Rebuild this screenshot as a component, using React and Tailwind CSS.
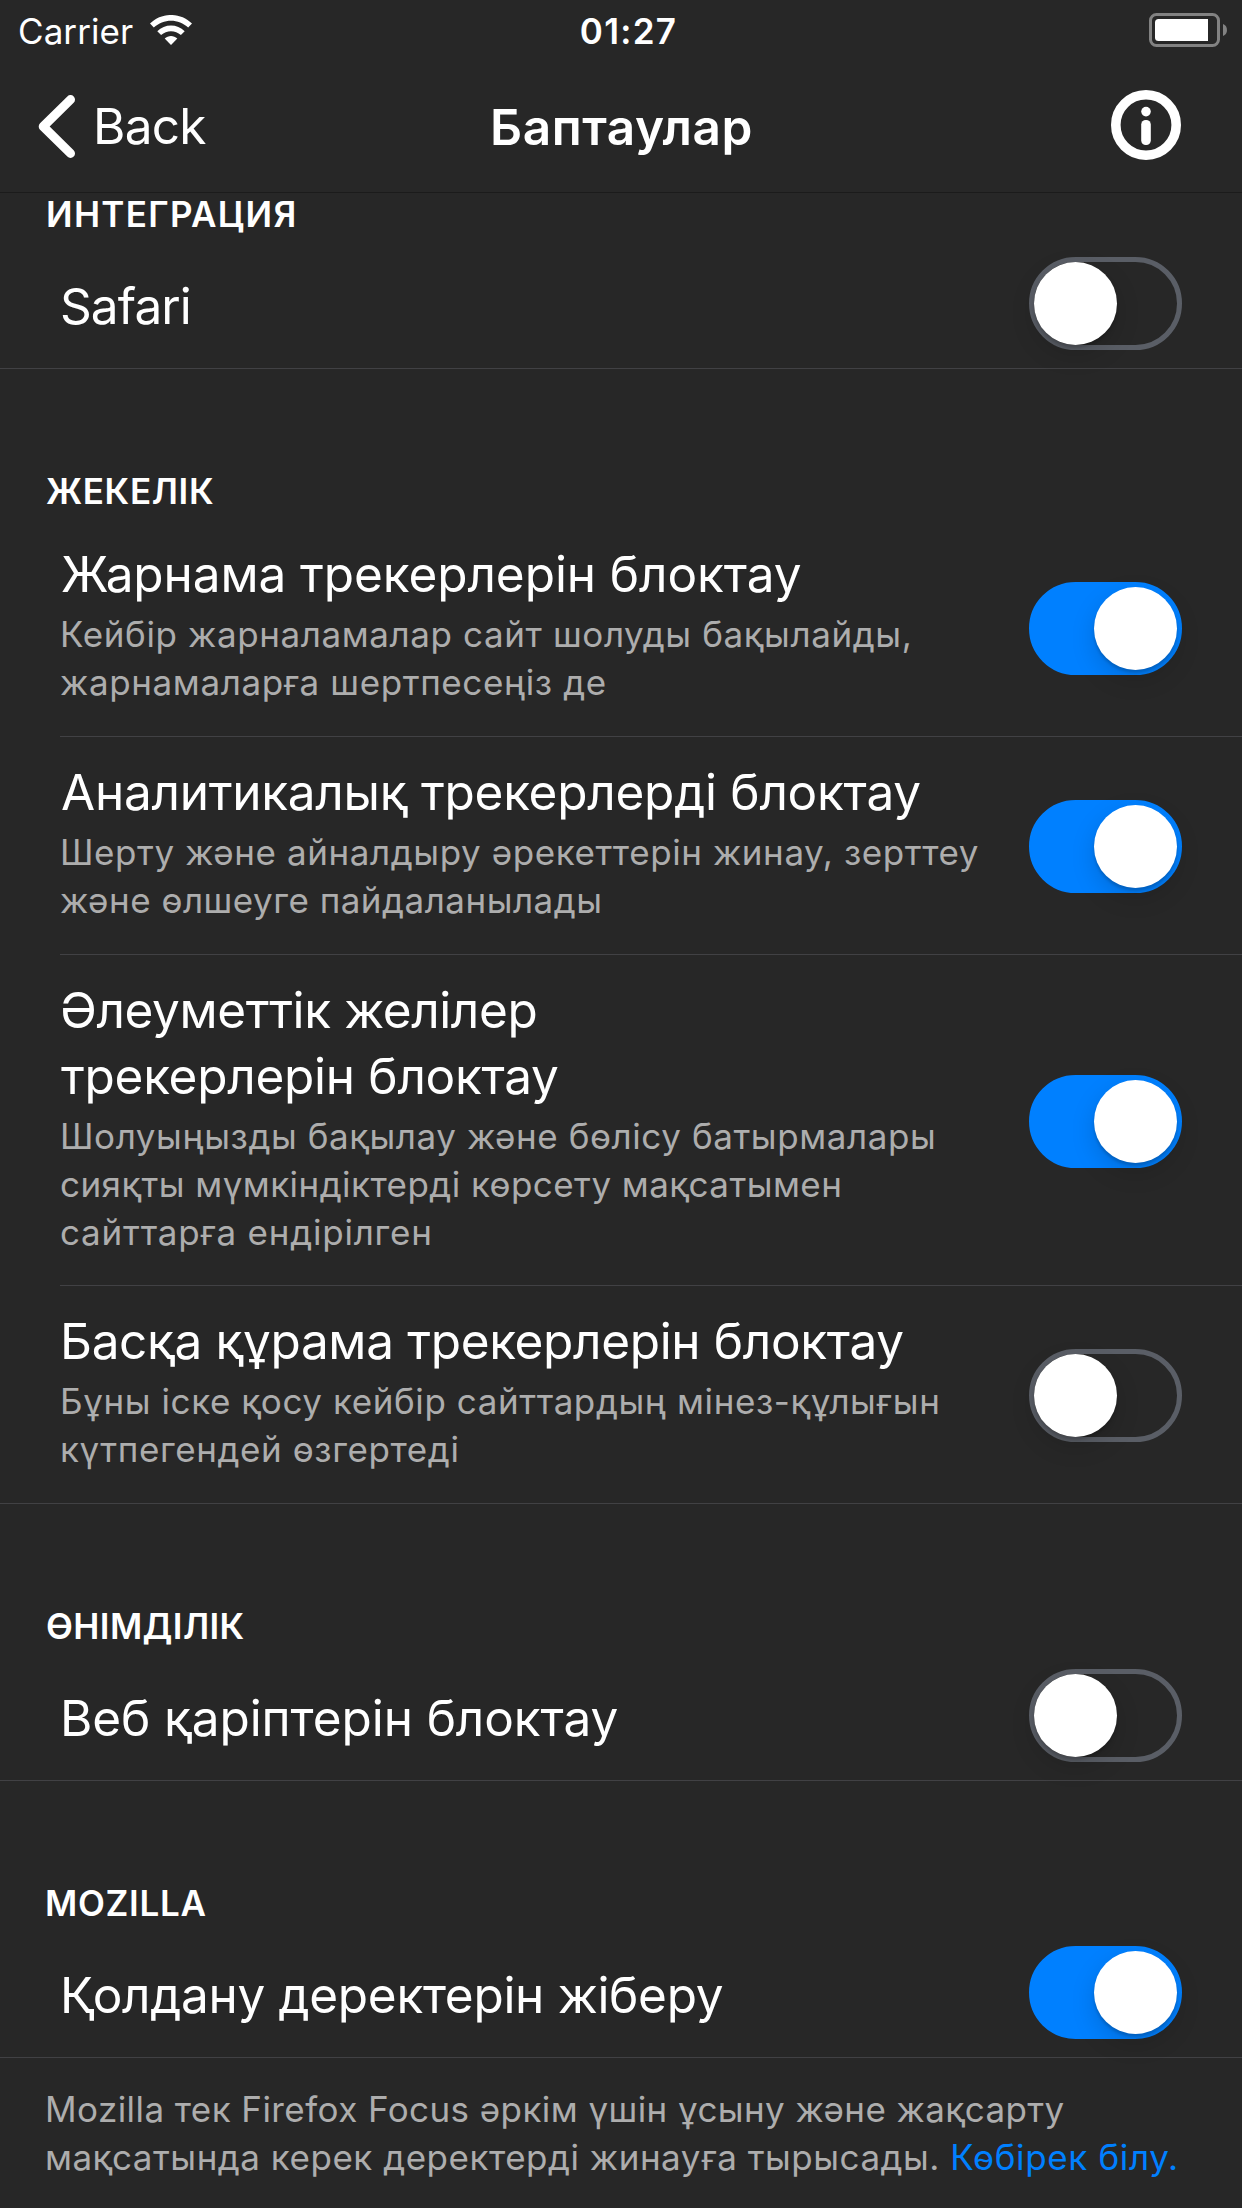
import React from "react";

const sections = [
  {
    title: "ИНТЕГРАЦИЯ",
    titleClass: "tracking-[1.33px] pl-px",
    header: "h-[49px]",
    rows: [{ title: [["Safari", "tracking-[-0.9px]"]], on: false }],
  },
  {
    title: "ЖЕКЕЛІК",
    titleClass: "tracking-[0.65px] pl-px",
    header: "h-[150px]",
    rows: [
      {
        title: [["Жарнама трекерлерін блоктау", "tracking-[-0.08px]"]],
        text: [
          ["Кейбір жарналамалар сайт шолуды бақылайды,", "tracking-[0.605px]"],
          ["жарнамаларға шертпесеңіз де", "tracking-[0.607px]"],
        ],
        on: true,
      },
      {
        title: [["Аналитикалық трекерлерді блоктау", "tracking-[-0.26px]"]],
        text: [
          ["Шерту және айналдыру әрекеттерін жинау, зерттеу", "tracking-[0.581px]"],
          ["және өлшеуге пайдаланылады", "tracking-[0.5px]"],
        ],
        on: true,
      },
      {
        title: [
          ["Әлеуметтік желілер", "-ml-px tracking-[-0.394px]"],
          ["трекерлерін блоктау", "tracking-[-0.28px]"],
        ],
        text: [
          ["Шолуыңызды бақылау және бөлісу батырмалары", "tracking-[0.575px]"],
          ["сияқты мүмкіндіктерді көрсету мақсатымен", "tracking-[0.441px]"],
          ["сайттарға ендірілген", "tracking-[0.781px]"],
        ],
        on: true,
      },
      {
        title: [["Басқа құрама трекерлерін блоктау", "-ml-px tracking-[-0.34px]"]],
        text: [
          ["Бұны іске қосу кейбір сайттардың мінез-құлығын", "tracking-[0.587px]"],
          ["күтпегендей өзгертеді", "tracking-[0.59px]"],
        ],
        on: false,
      },
    ],
  },
  {
    title: "ӨНІМДІЛІК",
    titleClass: "tracking-[0.4px] pl-px",
    header: "h-[150px]",
    rows: [{ title: [["Веб қаріптерін блоктау", "tracking-[-0.095px]"]], on: false }],
  },
  {
    title: "MOZILLA",
    titleClass: "tracking-[0.703px]",
    header: "h-[150px]",
    rows: [{ title: [["Қолдану деректерін жіберу", "tracking-[-0.311px]"]], on: true }],
  },
];

function Toggle({ on, className }) {
  return (
    <div
      role="switch"
      aria-checked={on}
      className={`flex h-[93px] w-[153px] shrink-0 rounded-full border-5 ${
        on ? "justify-end border-[#0080ff] bg-[#0080ff]" : "justify-start border-[#5a5e66]"
      } ${className}`}
    >
      <div className="size-[83px] rounded-full bg-white shadow-[0_9px_24px_rgba(0,0,0,0.15),0_3px_3px_rgba(0,0,0,0.16)]" />
    </div>
  );
}

function Row({ row, last }) {
  const single = !row.text;
  return (
    <div className={last ? "border-b border-[#414144]" : "pl-[60px]"}>
      <div
        className={`flex items-center justify-between pr-[60px] ${
          last ? "pl-[60px]" : "border-b border-[#414144]"
        } ${single ? "h-[126px]" : ""}`}
      >
        <div
          className={`whitespace-nowrap ${
            single ? "pt-[2px]" : row.title.length > 1 ? "pt-[22px] pb-[29px] pl-px" : "pt-[22px] pb-[30px] pl-px"
          }`}
        >
          {row.title.map(([t, c]) => (
            <div key={t} className={`text-[49.5px] leading-[66px] text-white ${c}`}>{t}</div>
          ))}
          {row.text && (
            <div className="mt-[3px]">
              {row.text.map(([t, c]) => (
                <div key={t} className={`-ml-px text-[35px] leading-[48px] text-[#adadad] ${c}`}>{t}</div>
              ))}
            </div>
          )}
        </div>
        <Toggle on={row.on} className={single ? "mb-[3px]" : "mt-[2px]"} />
      </div>
    </div>
  );
}

function StatusBar() {
  return (
    <div className="grid h-[60px] grid-cols-3 items-center pr-[15px] pl-[18px] text-[35px]">
      <div className="flex h-[60px] items-center gap-[17px]">
        <span className="h-[60px] leading-[62px] tracking-[0.075px]">Carrier</span>
        <svg className="h-[30px] w-[42px]" viewBox="0 0 42 30" fill="white">
          <path d="M0 8.6 C11.500 -2.900 30.500 -2.900 42 8.600 L38.200 12.600 C28.700 3.400 13.300 3.400 3.800 12.600 Z" />
          <path d="M7.300 16.200 C14.800 8.700 27.200 8.700 34.700 16.200 L30.900 20.100 C25.400 14.900 16.600 14.900 11.100 20.100 Z" />
          <path d="M14.700 23.600 C18.200 20.100 23.800 20.100 27.300 23.600 L21 30 Z" />
        </svg>
      </div>
      <div className="h-[60px] pl-[12px] text-center leading-[62px] font-semibold tracking-[1.286px]">01:27</div>
      <div className="flex justify-end">
        <svg className="h-[34px] w-[78px]" viewBox="0 0 78 34">
          <rect x="1.500" y="1.500" width="68" height="31" rx="6" fill="none" stroke="#828282" strokeWidth="3" />
          <path d="M9.500 6 H59 V28 H9.500 Q6 28 6 24.500 V9.500 Q6 6 9.500 6 Z" fill="white" />
          <path d="M74 11 C79.300 12.500 79.300 21.500 74 23 Z" fill="#828282" />
        </svg>
      </div>
    </div>
  );
}

function NavBar() {
  return (
    <div className="grid h-[133px] grid-cols-3 border-b border-[#1b1b1b] text-[49.5px] leading-[66px]">
      <div className="flex pt-[33px] pl-[38px]">
        <svg className="mt-[2px] h-[63px] w-[37px]" viewBox="0 0 37 63" fill="none" stroke="white" strokeWidth="9" strokeLinecap="round" strokeLinejoin="round">
          <path d="M32.500 4.600 L5.200 31.500 L32.500 58.400" />
        </svg>
        <span className="ml-[18px] tracking-[-0.7px]">Back</span>
      </div>
      <div className="pt-[34px] pl-px text-center font-semibold tracking-[0.577px]">Баптаулар</div>
      <div className="flex justify-end pt-[30px] pr-[61px]">
        <svg className="size-[70px]" viewBox="0 0 70 70" fill="white">
          <circle cx="35" cy="35" r="30.200" fill="none" stroke="white" strokeWidth="9.600" />
          <circle cx="35" cy="21.600" r="4.800" />
          <rect x="30.200" y="30" width="9.600" height="25" rx="4.500" />
        </svg>
      </div>
    </div>
  );
}

export default function App() {
  return (
    <div className="h-[2208px] w-[1242px] overflow-hidden bg-[#272727] font-[Inter,sans-serif] text-white">
      <StatusBar />
      <NavBar />
      {sections.map((s) => (
        <section key={s.title}>
          <div className={`flex items-end pb-[4px] pl-[45px] ${s.header}`}>
            <h2 className={`text-[35px] leading-[48px] font-semibold whitespace-nowrap ${s.titleClass}`}>{s.title}</h2>
          </div>
          {s.rows.map((r, i) => (
            <Row key={i} row={r} last={i === s.rows.length - 1} />
          ))}
        </section>
      ))}
      <p className="pt-[27px] pl-[45px] text-[35px] leading-[48px] whitespace-nowrap text-[#adadad]">
        <span className="block tracking-[0.423px]">Mozilla тек Firefox Focus әркім үшін ұсыну және жақсарту</span>
        <span className="tracking-[0.51px]">мақсатында керек деректерді жинауға тырысады. </span>
        <a className="tracking-[0.639px] text-[#0080ff]">Көбірек білу.</a>
      </p>
    </div>
  );
}
